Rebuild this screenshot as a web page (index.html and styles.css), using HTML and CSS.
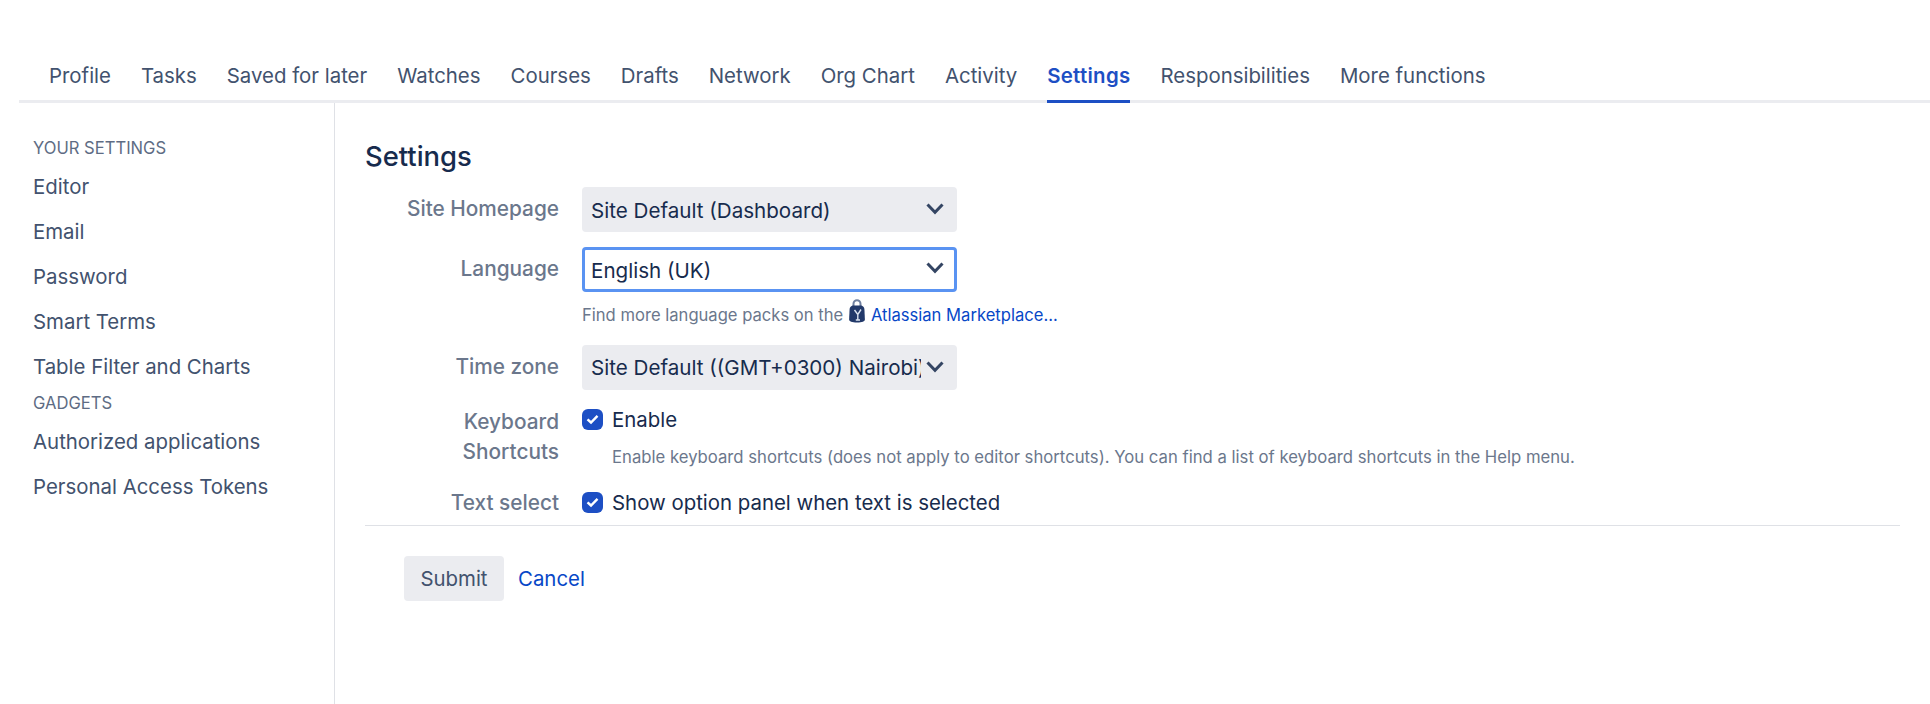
FILE: index.html
```html
<!DOCTYPE html>
<html lang="en">
<head>
<meta charset="utf-8">
<title>Settings</title>
<link rel="stylesheet" href="styles.css">
</head>
<body>
<nav class="tabs">
  <a class="tab">Profile</a>
  <a class="tab">Tasks</a>
  <a class="tab">Saved for later</a>
  <a class="tab">Watches</a>
  <a class="tab">Courses</a>
  <a class="tab">Drafts</a>
  <a class="tab">Network</a>
  <a class="tab">Org Chart</a>
  <a class="tab">Activity</a>
  <a class="tab active">Settings</a>
  <a class="tab">Responsibilities</a>
  <a class="tab">More functions</a>
</nav>
<div class="page">
  <aside class="side">
    <h4 class="side-head first">YOUR SETTINGS</h4>
    <a class="side-link">Editor</a>
    <a class="side-link">Email</a>
    <a class="side-link">Password</a>
    <a class="side-link">Smart Terms</a>
    <a class="side-link">Table Filter and Charts</a>
    <h4 class="side-head">GADGETS</h4>
    <a class="side-link">Authorized applications</a>
    <a class="side-link">Personal Access Tokens</a>
  </aside>
  <main class="main">
    <h1 class="title">Settings</h1>
    <form class="form">
      <div class="row row-select">
        <label class="label">Site Homepage</label>
        <div class="select"><span class="select-text">Site Default (Dashboard)</span><svg class="chev" viewBox="0 0 18 12"><path d="M1.500 1.500 9 9.300 16.500 1.500" /></svg></div>
      </div>
      <div class="row row-select">
        <label class="label">Language</label>
        <div class="field">
          <div class="select focused"><span class="select-text">English (UK)</span><svg class="chev" viewBox="0 0 18 12"><path d="M1.500 1.500 9 9.300 16.500 1.500" /></svg></div>
          <p class="help">Find more language packs on the <svg class="bag" viewBox="0 0 16 24"><path class="bag-handle" d="M4.500 8V4.800a3.500 3.500 0 0 1 7 0V8"/><path class="bag-body" d="M3.500 6.500h9c2 .7 2.700 2 2.900 3.500l.5 10.500c0 1.800-2.800 3-7.900 3s-7.900-1.200-7.900-3L.6 10c.2-1.500.9-2.800 2.900-3.500Z"/><path class="bag-hi" d="M5.500 11 8.800 15.500 12 10.500M8.800 15.500V21M6.800 21H11"/></svg><a class="link">Atlassian Marketplace...</a></p>
        </div>
      </div>
      <div class="row row-select">
        <label class="label">Time zone</label>
        <div class="select select-clip"><span class="select-text">Site Default ((GMT+0300) Nairobi)</span><svg class="chev" viewBox="0 0 18 12"><path d="M1.500 1.500 9 9.300 16.500 1.500" /></svg></div>
      </div>
      <div class="row row-check">
        <label class="label">Keyboard Shortcuts</label>
        <div class="field">
          <div class="check-line"><span class="check"><svg viewBox="0 0 21 21"><path d="M5.500 10.300 9 13.500 15.500 6.800"/></svg></span><span class="check-text">Enable</span></div>
          <p class="desc">Enable keyboard shortcuts (does not apply to editor shortcuts). You can find a list of keyboard shortcuts in the Help menu.</p>
        </div>
      </div>
      <div class="row row-last">
        <label class="label">Text select</label>
        <div class="check-line"><span class="check"><svg viewBox="0 0 21 21"><path d="M5.500 10.300 9 13.500 15.500 6.800"/></svg></span><span class="check-text">Show option panel when text is selected</span></div>
      </div>
      <div class="actions">
        <button class="btn" type="button">Submit</button>
        <a class="link cancel">Cancel</a>
      </div>
    </form>
  </main>
</div>
</body>
</html>
```
FILE: styles.css
```css
* { box-sizing: border-box; }
html, body { margin: 0; padding: 0; height: 100%; background: #fff; }
body {
  font-family: Inter, "Liberation Sans", sans-serif;
  font-size: 20.400px;
  color: #172b4d;
  overflow: hidden;
}
.tabs {
  display: flex;
  gap: 30px;
  margin: 50px 0 0 19px;
  padding-left: 30px;
  height: 53px;
  border-bottom: 3px solid #ebecf0;
}
.tab {
  color: #42526e;
  height: 53px;
  line-height: 52px;
  white-space: nowrap;
}
.tab.active {
  color: #1d4fc4;
  font-weight: 600;
  letter-spacing: .3px;
  border-bottom: 3px solid #1d4fc4;
}
.page { display: flex; height: 601px; }
.side {
  width: 335px;
  flex: none;
  padding: 35px 0 0 33px;
  border-right: 1px solid #dfe1e6;
  display: flex;
  flex-direction: column;
}
.side-head {
  margin: 0;
  font-size: 16.600px;
  font-weight: 400;
  line-height: 20px;
  color: #5e6c84;
}
.side-head.first { margin-bottom: 6px; }
.side-link {
  color: #42526e;
  line-height: 45px;
  height: 45px;
}
.side-link + .side-head { margin-top: 4px; margin-bottom: 6px; }
.main { flex: 1; padding: 0 30px; min-width: 0; }
.title {
  margin: 35px 0 0;
  font-size: 27.400px;
  font-weight: 500;
  line-height: 36px;
  color: #172b4d;
}
.form { margin-top: 13px; }
.row { display: flex; gap: 23px; }
.row-select { margin-bottom: 15px; }
.label {
  width: 194px;
  flex: none;
  text-align: right;
  color: #6b778c;
  font-weight: 500;
  line-height: 30px;
  font-size: 20.800px;
}
.row-select > .label { padding-top: 7px; }
.select {
  width: 375px;
  height: 45px;
  background: #ebecf0;
  border-radius: 4px;
  display: flex;
  align-items: center;
  padding: 2px 13px 0 9px;
  font-size: 20.600px;
}
.select.focused {
  background: #fff;
  border: 3px solid #5a93f2;
  padding: 1px 10px 0 6px;
}
.select.select-clip { padding-top: 0; }
.select-text {
  flex: 1;
  min-width: 0;
  overflow: hidden;
  white-space: nowrap;
  color: #172b4d;
  margin-right: 5px;
}
.chev { width: 18px; height: 12px; flex: none; margin-top: -4px; }
.select-clip .chev { margin-top: -2px; }
.chev path { fill: none; stroke: #344563; stroke-width: 3; }
.help {
  margin: 13px 0 0;
  font-size: 16.600px;
  line-height: 20px;
  color: #6b778c;
  height: 25px;
  display: flex;
  align-items: flex-start;
  white-space: pre;
}
.bag { width: 16px; height: 24px; margin: -6px 6px 0 1px; flex: none; }
.bag-body { fill: #22396a; }
.bag-hi { fill: none; stroke: #dbe3f0; stroke-width: 1.400; }
.bag-handle { fill: none; stroke: #6f80a0; stroke-width: 2; }
.link { color: #0747c7; }
.row-check { margin-top: 19px; height: 79px; }
.row-check .label { margin-top: -2px; }
.check-line { display: flex; align-items: center; gap: 9px; height: 21px; }
.check {
  width: 21px;
  height: 21px;
  border-radius: 6px;
  background: #1d4fc4;
  flex: none;
}
.check svg { display: block; width: 21px; height: 21px; }
.check path { fill: none; stroke: #fff; stroke-width: 2.400; }
.check-text { color: #172b4d; white-space: nowrap; }
.desc {
  margin: 17px 0 0 30px;
  font-size: 16.700px;
  line-height: 20px;
  color: #6b778c;
  white-space: nowrap;
}
.row-last {
  height: 38px;
  border-bottom: 1px solid #dfe1e6;
  padding-top: 4px;
  align-items: flex-start;
}
.row-last .label { margin-top: -4px; }
.actions {
  display: flex;
  align-items: center;
  gap: 14px;
  padding: 30px 0 0 39px;
}
.btn {
  width: 100px;
  height: 45px;
  background: #ebecf0;
  border: 0;
  border-radius: 4px;
  font: inherit;
  color: #42526e;
  padding: 0;
}
```
